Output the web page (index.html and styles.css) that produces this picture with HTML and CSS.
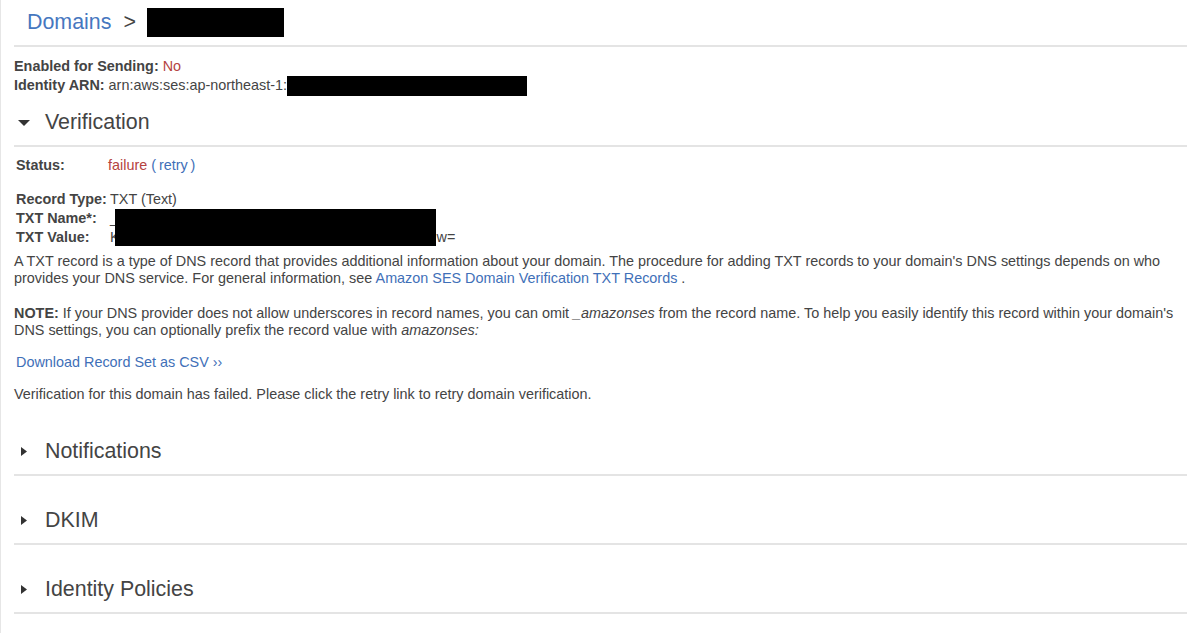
FILE: index.html
```html
<!DOCTYPE html>
<html lang="en">
<head>
<meta charset="utf-8">
<title>Domains</title>
<link rel="stylesheet" href="styles.css">
</head>
<body>
<div class="page">
  <div class="crumb">
    <a class="crumb-link" href="#">Domains</a>
    <span class="crumb-sep">&gt;</span>
    <span class="redact crumb-redact"></span>
  </div>

  <div class="meta">
    <div><b>Enabled for Sending:</b> <span class="bad">No</span></div>
    <div><b>Identity ARN:</b> arn:aws:ses:ap-northeast-1:<span class="redact arn-redact"></span></div>
  </div>

  <section class="panel">
    <div class="panel-head">
      <span class="caret"><svg width="12" height="6" viewBox="0 0 12 6"><path d="M0 0H12L6 6Z" fill="#333"/></svg></span>
      Verification
    </div>
    <div class="panel-body">
      <div class="status-row">
        <b class="lbl">Status:</b>
        <span><span class="bad">failure</span> <a class="link retry" href="#">(&thinsp;retry&thinsp;)</a></span>
      </div>
      <div class="records">
        <b class="lbl">Record Type:</b><span>TXT (Text)</span>
        <b class="lbl">TXT Name*:</b><span>_</span>
        <b class="lbl">TXT Value:</b><span>K<span class="gap"></span>w=</span>
        <span class="redact rec-redact"></span>
      </div>
      <p class="para first">A TXT record is a type of DNS record that provides additional information about your domain. The procedure for adding TXT records to your domain's DNS settings depends on who provides your DNS service. For general information, see <a class="link" href="#">Amazon SES Domain Verification TXT Records</a> .</p>
      <p class="para note"><b>NOTE:</b> If your DNS provider does not allow underscores in record names, you can omit <i>_amazonses</i> from the record name. To help you easily identify this record within your domain's DNS settings, you can optionally prefix the record value with <i>amazonses:</i></p>
      <p class="para download"><a class="link" href="#">Download Record Set as CSV ››</a></p>
      <p class="para failed">Verification for this domain has failed. Please click the retry link to retry domain verification.</p>
    </div>
  </section>

  <section class="panel collapsed first-collapsed">
    <div class="panel-head">
      <span class="caret"><svg class="right" width="6" height="9" viewBox="0 0 6 9"><path d="M0 0L6 4.5L0 9Z" fill="#333"/></svg></span>
      Notifications
    </div>
  </section>
  <section class="panel collapsed">
    <div class="panel-head">
      <span class="caret"><svg class="right" width="6" height="9" viewBox="0 0 6 9"><path d="M0 0L6 4.5L0 9Z" fill="#333"/></svg></span>
      DKIM
    </div>
  </section>
  <section class="panel collapsed">
    <div class="panel-head">
      <span class="caret"><svg class="right" width="6" height="9" viewBox="0 0 6 9"><path d="M0 0L6 4.5L0 9Z" fill="#333"/></svg></span>
      Identity Policies
    </div>
  </section>
</div>
</body>
</html>
```

FILE: styles.css
```css
html, body {
  margin: 0;
  padding: 0;
  background: #fff;
}

body {
  font-family: "Liberation Sans", Arial, sans-serif;
  font-size: 14.4px;
  color: #444;
}

.page {
  border-left: 1px solid #e6e6e6;
  min-height: 633px;
  padding: 0 13px 0 13px;
  box-sizing: border-box;
}

.redact {
  display: inline-block;
  background: #000;
}

.crumb {
  height: 45px;
  display: flex;
  align-items: center;
  padding-left: 13px;
  border-bottom: 2px solid #e4e4e4;
  font-size: 21.4px;
}

.crumb-link {
  color: #4677bf;
  text-decoration: none;
}

.crumb-sep {
  color: #444;
  margin-left: 12px;
  margin-right: 11px;
}

.crumb-redact {
  width: 137px;
  height: 29px;
}

.meta {
  padding-top: 10px;
  line-height: 19px;
}

.meta b, .lbl {
  font-weight: bold;
  color: #444;
}

.arn-redact {
  width: 240px;
  height: 20px;
  vertical-align: middle;
  margin-left: 0;
}

.bad {
  color: #b5433f;
}

.link {
  color: #3f70b8;
  text-decoration: none;
}

.panel-head {
  height: 43px;
  padding-bottom: 1px;
  display: flex;
  align-items: center;
  font-size: 21.4px;
  color: #444;
  border-bottom: 2px solid #e4e4e4;
}

.panel {
  margin-top: 5px;
}

.panel.first-collapsed {
  margin-top: 27px;
}

.panel.collapsed + .panel.collapsed {
  margin-top: 23px;
}

.caret {
  width: 31px;
  display: flex;
  align-items: center;
  box-sizing: border-box;
  padding-left: 4px;
}

.caret svg.right {
  margin-left: 3px;
}

.panel-body {
  padding-top: 10px;
}

.status-row {
  display: grid;
  grid-template-columns: 92px 1fr;
  line-height: 17px;
  padding-left: 2px;
}

.records {
  position: relative;
  margin-top: 16px;
  display: grid;
  grid-template-columns: 94px 1fr;
  line-height: 19px;
  padding-left: 2px;
}

.gap {
  display: inline-block;
  width: 317px;
}

.rec-redact {
  position: absolute;
  left: 101px;
  top: 19px;
  width: 321px;
  height: 37px;
}

.para {
  margin: 0;
  line-height: 17px;
}

.para.first {
  margin-top: 6px;
}

.para.note {
  margin-top: 18px;
}

.para.download {
  margin-top: 15px;
  padding-left: 2px;
}

.para.failed {
  margin-top: 15px;
}
```
